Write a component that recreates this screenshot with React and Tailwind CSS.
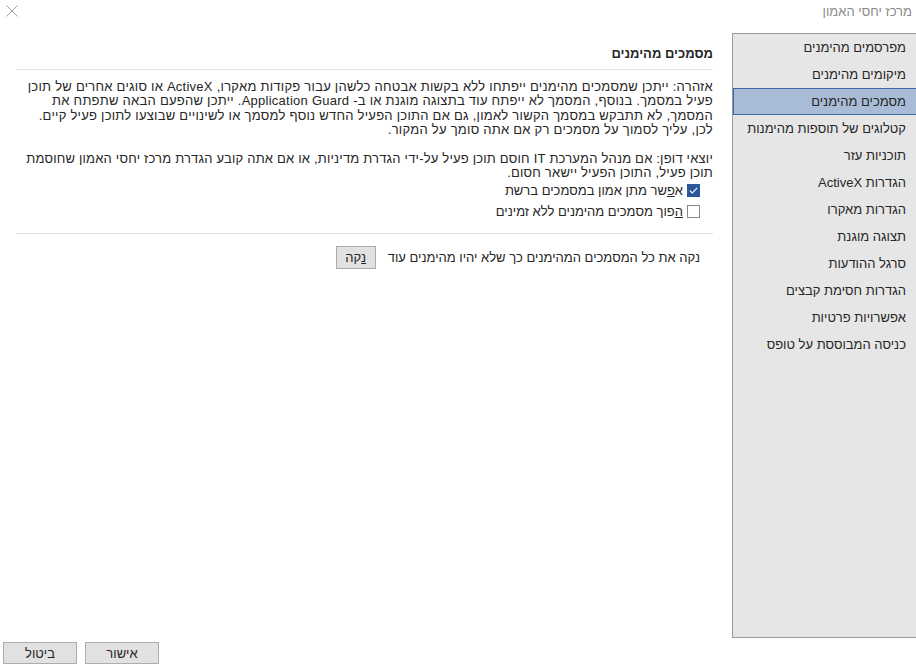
const navItems = [
  "מפרסמים מהימנים",
  "מיקומים מהימנים",
  "מסמכים מהימנים",
  "קטלוגים של תוספות מהימנות",
  "תוכניות עזר",
  "הגדרות ActiveX",
  "הגדרות מאקרו",
  "תצוגה מוגנת",
  "סרגל ההודעות",
  "הגדרות חסימת קבצים",
  "אפשרויות פרטיות",
  "כניסה המבוססת על טופס",
];

function Checkbox({ checked }) {
  return checked ? (
    <span className="flex h-[13px] w-[13px] shrink-0 items-center justify-center bg-[#2b579a]">
      <svg width="9" height="7" viewBox="0 0 9 7" fill="none">
        <path d="M0.8 3.6 L3.3 6 L8.2 0.8" stroke="white" strokeWidth="1.1" />
      </svg>
    </span>
  ) : (
    <span className="h-[13px] w-[13px] shrink-0 border border-[#8a8a8a] bg-white" />
  );
}

function DlgButton({ children, className = "" }) {
  return (
    <button className={"h-[22px] border border-[#adadad] bg-[#e1e1e1] text-[13px] leading-none text-[#262626] " + className}>
      {children}
    </button>
  );
}

export default function App() {
  return (
    <div
      dir="rtl"
      className="flex h-[672px] w-[916px] flex-col bg-white font-['Liberation_Sans',sans-serif] text-[13px] text-[#262626]"
    >
      <div className="flex h-[33px] items-start justify-between pl-[6px] pr-[4px] pt-[4px]">
        <span className="text-[#8a8a8a] leading-[15px]">מרכז יחסי האמון</span>
        <svg width="12" height="12" viewBox="0 0 12 12" className="mt-px">
          <path d="M0.5 0.5 L11.5 11.5 M11.5 0.5 L0.5 11.5" stroke="#a0a0a0" strokeWidth="1" />
        </svg>
      </div>

      <div className="flex min-h-0 flex-1">
        <nav className="w-[184px] shrink-0 border-y border-l border-[#9a9a9a] bg-[#e6e6e6]">
          {navItems.map((item, i) => (
            <div
              key={item}
              className={
                "flex h-[27px] items-center pr-[10px] " +
                (i === 2 ? "border-y border-l border-[#3d67a8] bg-[#a8bcd7]" : "")
              }
            >
              {item}
            </div>
          ))}
        </nav>

        <main className="flex-1 pl-4 pr-[19px] pt-[12px]">
          <div className="border-b border-[#e3e3e3] pb-[7px] font-bold leading-[17px]">מסמכים מהימנים</div>

          <p className="mt-[10px] whitespace-nowrap leading-[14.4px] tracking-[0.25px]">
            אזהרה: ייתכן שמסמכים מהימנים ייפתחו ללא בקשות אבטחה כלשהן עבור פקודות מאקרו, ActiveX או סוגים אחרים של תוכן
            <br />
            פעיל במסמך. בנוסף, המסמך לא ייפתח עוד בתצוגה מוגנת או ב- Application Guard. ייתכן שהפעם הבאה שתפתח את
            <br />
            המסמך, לא תתבקש במסמך הקשור לאמון, גם אם התוכן הפעיל החדש נוסף למסמך או לשינויים שבוצעו לתוכן פעיל קיים.
            <br />
            לכן, עליך לסמוך על מסמכים רק אם אתה סומך על המקור.
          </p>

          <p className="mt-[14px] whitespace-nowrap leading-[14.4px] tracking-[0.2px]">
            יוצאי דופן: אם מנהל המערכת IT חוסם תוכן פעיל על-ידי הגדרת מדיניות, או אם אתה קובע הגדרת מרכז יחסי האמון שחוסמת
            <br />
            תוכן פעיל, התוכן הפעיל יישאר חסום.
          </p>

          <div className="pr-[13px]">
            <label className="flex h-[21px] items-center gap-[4px]">
              <Checkbox checked />
              <span>
                א<u>פ</u>שר מתן אמון במסמכים ברשת
              </span>
            </label>
            <label className="flex h-[21px] items-center gap-[4px]">
              <Checkbox />
              <span>
                <u>ה</u>פוך מסמכים מהימנים ללא זמינים
              </span>
            </label>
          </div>

          <div className="mt-[11px] border-t border-[#e0e0e0]" />

          <div className="mt-[12px] flex items-center gap-[12px] pr-[13px]">
            <span>נקה את כל המסמכים המהימנים כך שלא יהיו מהימנים עוד</span>
            <DlgButton className="h-[23px] w-[40px]">
              <u>נ</u>קה
            </DlgButton>
          </div>
        </main>
      </div>

      <div className="flex h-[34px] items-start justify-end gap-[8px] pl-[3px] pt-[4px]">
        <DlgButton className="w-[74px]">אישור</DlgButton>
        <DlgButton className="w-[74px]">ביטול</DlgButton>
      </div>
    </div>
  );
}
